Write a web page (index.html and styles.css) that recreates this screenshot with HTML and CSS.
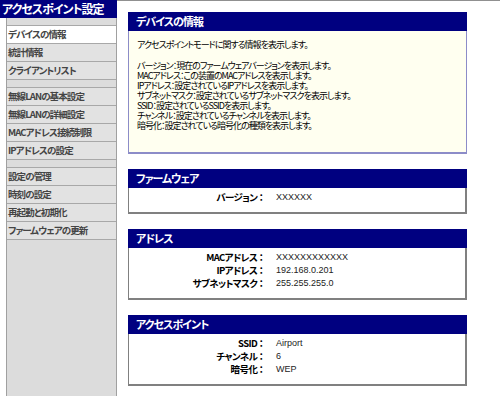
FILE: index.html
```html
<!DOCTYPE html>
<html lang="ja">
<head>
    <meta charset="UTF-8">
    <title>アクセスポイント設定</title>
    <link rel="stylesheet" href="styles.css">
</head>
<body>
    <div class="page">
        <aside class="side">
            <div class="side-title">アクセスポイント設定</div>
            <div class="side-panel">
                <div class="sep"></div>
                <a class="item active" href="#">デバイスの情報</a>
                <a class="item" href="#">統計情報</a>
                <a class="item" href="#">クライアントリスト</a>
                <div class="sep"></div>
                <a class="item" href="#">無線LANの基本設定</a>
                <a class="item" href="#">無線LANの詳細設定</a>
                <a class="item" href="#">MACアドレス接続制限</a>
                <a class="item" href="#">IPアドレスの設定</a>
                <div class="sep"></div>
                <a class="item" href="#">設定の管理</a>
                <a class="item" href="#">時刻の設定</a>
                <a class="item" href="#">再起動と初期化</a>
                <a class="item" href="#">ファームウェアの更新</a>
            </div>
        </aside>

        <main class="main">
            <section class="box">
                <h2 class="box-head">デバイスの情報</h2>
                <div class="box-body info">
                    <p class="lead">アクセスポイントモードに関する情報を表示します。</p>
                    <p>バージョン：現在のファームウェアバージョンを表示します。<br>
                    MACアドレス：この装置のMACアドレスを表示します。<br>
                    IPアドレス：設定されているIPアドレスを表示します。<br>
                    サブネットマスク：設定されているサブネットマスクを表示します。<br>
                    SSID：設定されているSSIDを表示します。<br>
                    チャンネル：設定されているチャンネルを表示します。<br>
                    暗号化：設定されている暗号化の種類を表示します。</p>
                </div>
            </section>

            <section class="box">
                <h2 class="box-head">ファームウェア</h2>
                <div class="box-body kv">
                    <span class="key">バージョン ：</span><span class="val">XXXXXX</span>
                </div>
            </section>

            <section class="box">
                <h2 class="box-head">アドレス</h2>
                <div class="box-body kv">
                    <span class="key">MACアドレス ：</span><span class="val">XXXXXXXXXXXX</span>
                    <span class="key">IPアドレス ：</span><span class="val">192.168.0.201</span>
                    <span class="key">サブネットマスク ：</span><span class="val">255.255.255.0</span>
                </div>
            </section>

            <section class="box">
                <h2 class="box-head">アクセスポイント</h2>
                <div class="box-body kv">
                    <span class="key">SSID ：</span><span class="val">Airport</span>
                    <span class="key">チャンネル ：</span><span class="val">6</span>
                    <span class="key">暗号化 ：</span><span class="val">WEP</span>
                </div>
            </section>
        </main>
    </div>
</body>
</html>
```

FILE: styles.css
```css
body {
    margin: 0;
    background: #ffffff;
    font-family: "Noto Sans CJK JP", "DejaVu Sans", sans-serif;
    font-feature-settings: "palt";
    color: #000000;
}
.page {
    display: flex;
    height: 396px;
    overflow: hidden;
}

/* menu */
.side {
    width: 117px;
    display: flex;
    flex-direction: column;
    flex-shrink: 0;
}
.side-title {
    height: 18px;
    line-height: 18px;
    background: #000080;
    color: #ffffff;
    font-size: 12px;
    font-weight: bold;
    letter-spacing: -1px;
    padding-left: 2px;
    white-space: nowrap;
}
.side-panel {
    flex: 1;
    margin-left: 6px;
    background: #dcdcdc;
    border-left: 1px solid #a0a0a0;
    border-right: 1px solid #a0a0a0;
    display: flex;
    flex-direction: column;
}
.sep {
    height: 8px;
    border-bottom: 1px solid #a8a8a8;
    box-sizing: border-box;
}
.item {
    display: block;
    height: 18px;
    line-height: 17px;
    box-sizing: border-box;
    padding-left: 1px;
    background: #e2e2e2;
    border-bottom: 1px solid #a8a8a8;
    color: #444444;
    font-size: 9.5px;
    font-weight: bold;
    letter-spacing: -0.9px;
    text-decoration: none;
    white-space: nowrap;
}
.item.active {
    background: #ffffff;
}

/* content */
.main {
    flex: 1;
    border-top: 1px solid #909090;
    padding: 11px 0 0 11px;
}
.box {
    width: 339px;
    margin-bottom: 15px;
}
.box-head {
    margin: 0;
    height: 19px;
    line-height: 19px;
    background: #000080;
    color: #ffffff;
    font-size: 11px;
    font-weight: bold;
    letter-spacing: -1px;
    padding-left: 8px;
}
.box-body {
    font-size: 9px;
}
.info {
    background: #fffff0;
    border: 1px solid #8c8cc8;
    border-top: none;
    border-bottom-width: 2px;
    padding: 9px 8px 22px;
    line-height: 10px;
    letter-spacing: -1px;
    height: 123px;
    box-sizing: border-box;
}
.info p {
    margin: 0;
}
.info .lead {
    margin-bottom: 11px;
}
.kv {
    background: #ffffff;
    border: 1px solid #808080;
    border-top: none;
    border-right-width: 2px;
    border-bottom-width: 2px;
    padding: 3px 0 8px;
    display: grid;
    grid-template-columns: 134px 1fr;
    column-gap: 13px;
    line-height: 13px;
}
.key {
    text-align: right;
    font-size: 9.5px;
    font-weight: bold;
    letter-spacing: -0.6px;
    white-space: pre;
}
.val {
    font-family: "Liberation Sans", sans-serif;
    color: #222222;
}
```
